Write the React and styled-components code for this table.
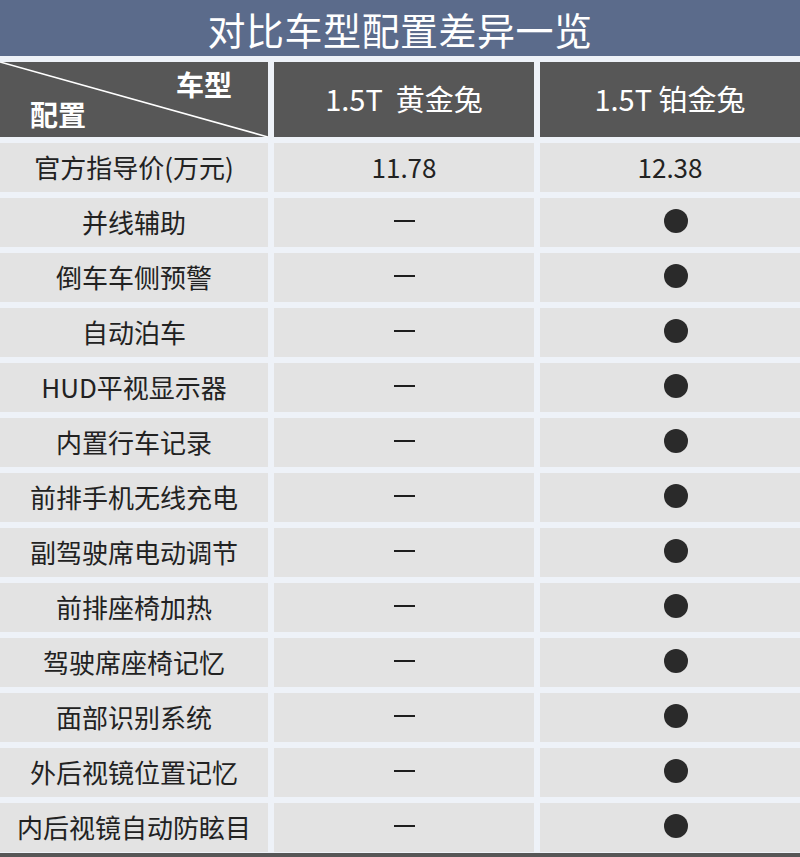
import React from 'react';
import styled, { createGlobalStyle } from 'styled-components';

const GlobalStyle = createGlobalStyle`
  html, body {
    margin: 0;
    padding: 0;
    overflow: hidden;
    background: #eef2f8;
  }
  body {
    font-family: "Noto Sans CJK SC", "Noto Sans", sans-serif;
  }
`;

const Page = styled.div`
  width: 800px;
  height: 857px;
  display: flex;
  flex-direction: column;
  background: #eef2f8;
`;

const TitleBar = styled.div`
  height: 56px;
  background: #5b6b8b;
  color: #ffffff;
  font-size: 38px;
  display: flex;
  align-items: center;
  justify-content: center;
  letter-spacing: 0.5px;
  flex-shrink: 0;
`;

const Table = styled.div`
  margin-top: 6px;
  display: grid;
  grid-template-columns: 268px 260px 260px;
  grid-template-rows: 75px;
  grid-auto-rows: 49px;
  gap: 6px;
`;

const HeadCell = styled.div`
  background: #575757;
  color: #ffffff;
  font-size: 29px;
  display: flex;
  align-items: center;
  justify-content: center;
  white-space: pre;
  padding-bottom: 4px;
`;

const CornerCell = styled.div`
  position: relative;
  background: #575757;
  color: #ffffff;
  font-size: 28px;
  font-weight: 700;
  display: flex;
  flex-direction: column;
  justify-content: space-between;
  padding: 7px 36px 9px 30px;
`;

const CornerLabel = styled.span`
  align-self: ${(p) => (p.$end ? 'flex-end' : 'flex-start')};
  line-height: 30px;
`;

const Diagonal = styled.svg`
  position: absolute;
  inset: 0;
  width: 100%;
  height: 100%;
`;

const Cell = styled.div`
  background: #e3e3e3;
  color: #222222;
  font-size: 26px;
  display: flex;
  align-items: center;
  justify-content: center;
  white-space: nowrap;
  padding-bottom: 3px;
`;

const Dash = styled.span`
  width: 21px;
  height: 2px;
  background: #1e1e1e;
`;

const Dot = styled.span`
  width: 24px;
  height: 24px;
  margin-left: 12px;
  border-radius: 50%;
  background: #2a2a2a;
`;

const BottomStrip = styled.div`
  margin-top: 1px;
  height: 4px;
  background: #575757;
  flex-shrink: 0;
`;

const features = [
  '并线辅助',
  '倒车车侧预警',
  '自动泊车',
  'HUD平视显示器',
  '内置行车记录',
  '前排手机无线充电',
  '副驾驶席电动调节',
  '前排座椅加热',
  '驾驶席座椅记忆',
  '面部识别系统',
  '外后视镜位置记忆',
  '内后视镜自动防眩目',
];

const App = () => (
  <Page>
    <GlobalStyle />
    <TitleBar>对比车型配置差异一览</TitleBar>
    <Table>
      <CornerCell>
        <Diagonal viewBox="0 0 268 75" preserveAspectRatio="none">
          <line x1="0" y1="0" x2="268" y2="75" stroke="#ffffff" strokeWidth="1.6" />
        </Diagonal>
        <CornerLabel $end>车型</CornerLabel>
        <CornerLabel>配置</CornerLabel>
      </CornerCell>
      <HeadCell>1.5T  黄金兔</HeadCell>
      <HeadCell>1.5T 铂金兔</HeadCell>

      <Cell>官方指导价(万元)</Cell>
      <Cell>11.78</Cell>
      <Cell>12.38</Cell>

      {features.map((name) => (
        <React.Fragment key={name}>
          <Cell>{name}</Cell>
          <Cell><Dash /></Cell>
          <Cell><Dot /></Cell>
        </React.Fragment>
      ))}
    </Table>
    <BottomStrip />
  </Page>
);

export default App;
